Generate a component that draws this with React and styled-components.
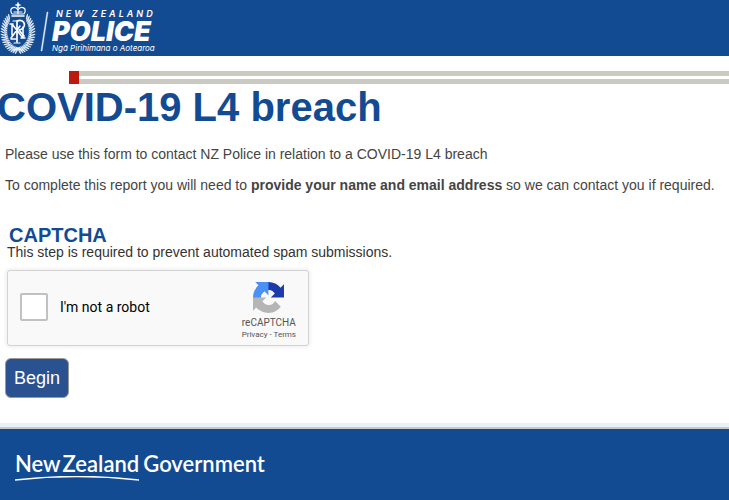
import React from "react";
import styled, { createGlobalStyle } from "styled-components";

const blue = "#134b93";
const sans = '"Liberation Sans", Arial, sans-serif';

const GlobalStyle = createGlobalStyle`
  * { box-sizing: border-box; }
  body { margin: 0; background: #fff; font-family: ${sans}; font-size: 14px; color: #444; overflow-x: hidden; }
  h1, h2, p { margin: 0; }
`;

const Page = styled.div`
  display: flex;
  flex-direction: column;
  min-height: 100vh;
`;

const Header = styled.header`
  display: flex;
  align-items: center;
  height: 56px;
  background: ${blue};
`;

const HomeLink = styled.a`
  display: flex;
  align-items: center;
  color: #fff;
  text-decoration: none;
`;

const Crest = styled.svg`
  width: 52px;
  height: 56px;
  flex: none;
`;

const Wordmark = styled.span`
  display: flex;
  flex-direction: column;
  font-family: Inter, sans-serif;
  font-style: italic;
  white-space: nowrap;
  padding-top: 6px;
`;

const Country = styled.span`
  padding-left: 4px;
  font-size: 9px;
  line-height: 10px;
  font-weight: 600;
  letter-spacing: 3px;
`;

const Police = styled.span`
  font-size: 27px;
  line-height: 25px;
  font-weight: 900;
`;

const Maori = styled.span`
  font-size: 8px;
  line-height: 9px;
  font-weight: 400;
`;

const Rule = styled.div`
  height: 13px;
  margin: 15px 0 0 69px;
  border: solid #cbcac2;
  border-width: 5px 0;
  display: flex;

  &::before {
    content: "";
    width: 10px;
    height: 13px;
    margin-top: -5px;
    background: #bb1a0d;
  }
`;

const Main = styled.main`
  flex: 1;
  display: flex;
  flex-direction: column;
  align-items: flex-start;
`;

const Title = styled.h1`
  margin-left: -3px;
  font-size: 40px;
  line-height: 46px;
  color: ${blue};
`;

const Intro = styled.div`
  display: flex;
  flex-direction: column;
  gap: 15px;
  padding: 16px 5px 0;
  line-height: 16px;
`;

const Verification = styled.section`
  padding: 32px 7px 0;
`;

const SectionTitle = styled.h2`
  padding-left: 2px;
  font-size: 20px;
  line-height: 20px;
  color: ${blue};
`;

const Hint = styled.p`
  line-height: 14px;
  color: #333;
`;

const Captcha = styled.div`
  display: flex;
  align-items: center;
  justify-content: space-between;
  width: 302px;
  height: 76px;
  margin-top: 11px;
  padding: 0 12px 2px;
  background: #f9f9f9;
  border: 1px solid #d3d3d3;
  border-radius: 3px;
  box-shadow: 0 0 4px 1px rgba(0, 0, 0, 0.08);
  font-family: Roboto, sans-serif;
`;

const RobotLabel = styled.label`
  display: flex;
  align-items: center;
  gap: 12px;
  color: #000;
`;

const RobotCheck = styled.input`
  appearance: none;
  width: 28px;
  height: 28px;
  margin: 0;
  background: #fff;
  border: 2px solid #c1c1c1;
  border-radius: 2px;

  &:checked { background: #4285f4; }
`;

const Badge = styled.div`
  display: flex;
  flex-direction: column;
  align-items: center;
  padding-top: 9px;
  color: #555;
  font-size: 10px;
  line-height: 12px;
`;

const BadgeIcon = styled.svg`
  width: 31px;
  height: 31px;
  margin-bottom: 4px;
`;

const Policies = styled.div`
  font-size: 8px;
`;

const PolicyLink = styled.a`
  color: inherit;
  text-decoration: none;
`;

const BeginButton = styled.button`
  height: 40px;
  margin: 12px 5px 24px;
  padding: 0 8px;
  background: #2a5291;
  border: 1px solid #999;
  border-radius: 6px;
  color: #fff;
  font-family: ${sans};
  font-size: 18px;
`;

const Footer = styled.footer`
  padding: 23px 15px 19px;
  background: ${blue};
  border-top: 2px solid #c8c8c8;
  box-shadow: 0 -4px 0 #e8f2f8;
`;

const GovernmentLink = styled.a`
  display: flex;
  align-items: flex-start;
  gap: 4px;
  color: #fff;
  font-family: Lato, sans-serif;
  font-size: 22px;
  font-weight: 600;
  line-height: 24px;
  text-decoration: none;
  white-space: nowrap;
`;

const CountryMark = styled.span`
  display: grid;
`;

const CountryName = styled.span`
  display: flex;
  gap: 2px;
`;

const Swoosh = styled.svg`
  width: 100%;
  height: 5px;
`;

const leaves = Array.from({ length: 19 }, (_, i) => {
  const angle = -50 + i * 7.6;
  const radians = (angle * Math.PI) / 180;
  return { x: Math.cos(radians) * 13.5, y: 32 + Math.sin(radians) * 18, angle };
});

function Wreath() {
  return [-1, 1].map((side) => (
    <g key={side} transform={`translate(18 0) scale(${side} 1)`} fill="#dce8f5">
      {leaves.map(({ x, y, angle }) => (
        <g key={angle} transform={`translate(${x} ${y}) rotate(${angle - 28})`}>
          <ellipse cx="1.5" rx="3" ry="0.8" />
          <ellipse cx="-2" cy="0.8" rx="2" ry="0.7" />
        </g>
      ))}
    </g>
  ));
}

function PoliceCrest() {
  return (
    <Crest viewBox="0 0 52 56" aria-hidden="true">
      <Wreath />
      <ellipse cx="18" cy="31" rx="9.5" ry="14.5" fill={blue} />
      <g fill="none" stroke="#fff" strokeLinecap="round" strokeLinejoin="round">
        <path d="M12 35V24l11 14V27M10 24h3M11 38l9-12M11 39h5M21 38h4" strokeWidth="1.5" />
        <path d="M17 42V21c9-3 10 8 2 9l5 6" strokeWidth="1.7" />
        <path d="M14 43h6M13 21h5" strokeWidth="1.2" />
        <path d="M12 14c-4-6 3-9 6-4 3-5 10-2 6 4zM18 9v5M14 12h8" strokeWidth="1.2" />
        <path d="M12 16h12M18 3v5M16 5h4" strokeWidth="1.6" />
        <path d="M13 50c2 0 4 0 5-2 1 2 3 2 5 2" strokeWidth="1" />
      </g>
      <path d="M47 12h1l-6 39h-1z" fill="#e6eff8" stroke="#e6eff8" strokeWidth="0.5" />
    </Crest>
  );
}

function RecaptchaIcon() {
  return (
    <BadgeIcon viewBox="0 0 64 64" aria-hidden="true">
      <path fill="#1c3aa9" d="M64 31.955l-.033-1.37V4.687l-7.16 7.16C50.948 4.674 42.033.093 32.05.093c-10.4 0-19.622 4.96-25.458 12.64l11.736 11.86a15.55 15.55 0 0 1 4.754-5.334c2.05-1.6 4.952-2.906 8.968-2.906.485 0 .86.057 1.135.163 4.976.393 9.288 3.14 11.828 7.124l-8.307 8.307L64 31.953" />
      <path fill="#4b90f5" d="M31.862.094l-1.37.033H4.594l7.16 7.16C4.58 13.147 0 22.06 0 32.046c0 10.4 4.96 19.622 12.64 25.458L24.5 45.768a15.55 15.55 0 0 1-5.334-4.754c-1.6-2.05-2.906-4.952-2.906-8.968 0-.485.057-.86.163-1.135.393-4.976 3.14-9.288 7.124-11.828l8.307 8.307L31.86.095" />
      <path fill="#b5b5b5" d="M.001 32.045l.033 1.37v25.898l7.16-7.16c5.86 7.173 14.774 11.754 24.76 11.754 10.4 0 19.622-4.96 25.458-12.64l-11.736-11.86a15.55 15.55 0 0 1-4.754 5.334c-2.05 1.6-4.952 2.906-8.968 2.906-.485 0-.86-.057-1.135-.163-4.976-.393-9.288-3.14-11.828-7.124l8.307-8.307c-10.522.04-22.4.066-27.295-.005" />
    </BadgeIcon>
  );
}

export default function App() {
  return (
    <Page>
      <GlobalStyle />
      <Header>
        <HomeLink href="#home">
          <PoliceCrest />
          <Wordmark>
            <Country>NEW ZEALAND</Country>
            <Police>POLICE</Police>
            <Maori>Ngā Pirihimana o Aotearoa</Maori>
          </Wordmark>
        </HomeLink>
      </Header>
      <Rule />
      <Main>
        <Title>COVID-19 L4 breach</Title>
        <Intro>
          <p>Please use this form to contact NZ Police in relation to a COVID-19 L4 breach</p>
          <p>
            To complete this report you will need to <strong>provide your name and email address</strong> so we can
            contact you if required.
          </p>
        </Intro>
        <Verification>
          <SectionTitle>CAPTCHA</SectionTitle>
          <Hint>This step is required to prevent automated spam submissions.</Hint>
          <Captcha>
            <RobotLabel htmlFor="robot">
              <RobotCheck id="robot" type="checkbox" />
              I'm not a robot
            </RobotLabel>
            <Badge>
              <RecaptchaIcon />
              <span>reCAPTCHA</span>
              <Policies>
                <PolicyLink href="#privacy">Privacy</PolicyLink> - <PolicyLink href="#terms">Terms</PolicyLink>
              </Policies>
            </Badge>
          </Captcha>
        </Verification>
        <BeginButton type="button">Begin</BeginButton>
      </Main>
      <Footer>
        <GovernmentLink href="#government">
          <CountryMark>
            <CountryName>
              <span>New</span>
              <span>Zealand</span>
            </CountryName>
            <Swoosh viewBox="0 0 124 5" preserveAspectRatio="none" aria-hidden="true">
              <path d="M0 4Q62-3 124 4" fill="none" stroke="#fff" strokeWidth="1.5" />
            </Swoosh>
          </CountryMark>
          <span>Government</span>
        </GovernmentLink>
      </Footer>
    </Page>
  );
}
